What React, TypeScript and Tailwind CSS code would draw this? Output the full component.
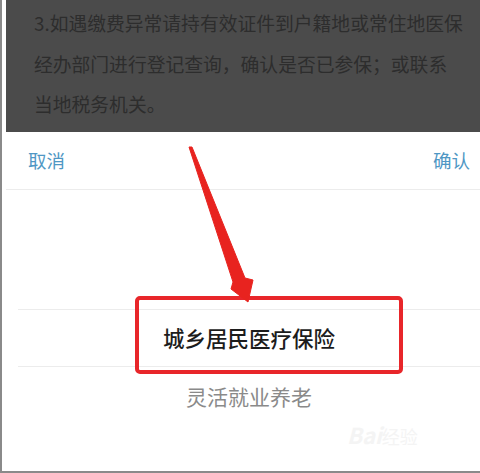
import React from 'react';

const font = { fontFamily: '"Noto Sans CJK SC", "Noto Sans", sans-serif' };

const tips = [
  '3.如遇缴费异常请持有效证件到户籍地或常住地医保',
  '经办部门进行登记查询，确认是否已参保；或联系',
  '当地税务机关。',
];

function Arrow() {
  return (
    <svg className="absolute left-0 top-0 pointer-events-none" width="480" height="473" viewBox="0 0 480 473">
      <polygon
        points="187,147 190,147 243,278 251,280 246,302 229,289 231,282"
        fill="#e8231f"
        stroke="#e8231f"
        strokeWidth="1"
        strokeLinejoin="round"
      />
    </svg>
  );
}

export default function App() {
  return (
    <div
      style={font}
      className="relative w-[480px] h-[473px] overflow-hidden bg-white border-l-2 border-b-2 border-[#8a8a8a] pl-[4px] flex flex-col"
    >
      {/* dimmed tip text */}
      <div className="h-[132px] bg-[#4b4b4b] pl-[28px] pt-[3px] text-[18.8px] leading-[40.5px] text-[#2d2d2d]">
        {tips.map((t, i) => (
          <div key={i} className="whitespace-nowrap">{t}</div>
        ))}
      </div>

      {/* picker header */}
      <div className="h-[58px] flex items-center justify-between pl-[22px] pr-[10px] border-b border-[#ececec] text-[18.5px] text-[#4f97c4]">
        <span>取消</span>
        <span>确认</span>
      </div>

      {/* picker items */}
      <div className="flex-1 flex flex-col pt-[119px] pl-3">
        <div className="h-[58px] flex items-center justify-center border-y border-[#ececec] text-[21.5px] font-medium text-[#1c1c1c]">
          城乡居民医疗保险
        </div>
        <div className="h-[60px] flex items-center justify-center text-[21px] text-[#8a8a8a]">
          灵活就业养老
        </div>
      </div>

      {/* annotation */}
      <div className="absolute left-[133px] top-[296px] w-[268px] h-[78px] border-[4px] border-[#e8262a] rounded-[5px]" />
      <Arrow />
      <div className="absolute left-[345px] top-[418px] text-[22px] font-bold italic text-[#f4f4f4] whitespace-nowrap">
        Bai<span className="text-[18px] not-italic font-normal">经验</span>
      </div>
    </div>
  );
}
